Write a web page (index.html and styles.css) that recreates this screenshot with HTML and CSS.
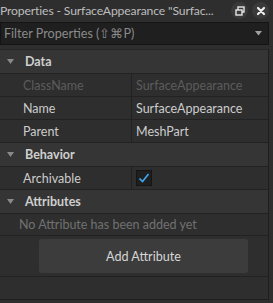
FILE: index.html
```html
<!DOCTYPE html>
<html lang="en">
<head>
    <meta charset="UTF-8">
    <meta name="viewport" content="width=device-width, initial-scale=1.0">
    <title>Properties</title>
    <link rel="stylesheet" href="styles.css">
</head>
<body>

    <div class="window">
        <div class="titlebar">
            <span class="title">Properties - SurfaceAppearance "Surfac...</span>
            <span class="title-btn">
                <svg width="10" height="10" viewBox="0 0 10 10"><rect x="3" y="1" width="6" height="5" fill="none" stroke="#e6e6e6" stroke-width="1.4"/><rect x="1" y="4" width="6" height="5" fill="#3a3a3a" stroke="#e6e6e6" stroke-width="1.4"/></svg>
            </span>
            <span class="title-btn">
                <svg width="10" height="10" viewBox="0 0 10 10"><path d="M2 2 L8 8 M8 2 L2 8" stroke="#eeeeee" stroke-width="2.2" stroke-linecap="round"/></svg>
            </span>
        </div>

        <div class="filter">
            <span class="filter-text">Filter Properties (⇧⌘P)</span>
            <svg class="caret" width="7" height="5" viewBox="0 0 7 5"><path d="M0 0 H7 L3.5 4.5 Z" fill="#a0a0a0"/></svg>
        </div>

        <div class="panel">
            <div class="group">
                <svg class="arrow" width="7" height="5" viewBox="0 0 7 5"><path d="M0 0 H7 L3.5 5 Z" fill="#8a8a8a"/></svg>
                Data
            </div>
            <div class="row disabled">
                <div class="key">ClassName</div>
                <div class="val">SurfaceAppearance</div>
            </div>
            <div class="row">
                <div class="key">Name</div>
                <div class="val">SurfaceAppearance</div>
            </div>
            <div class="row">
                <div class="key">Parent</div>
                <div class="val">MeshPart</div>
            </div>

            <div class="group">
                <svg class="arrow" width="7" height="5" viewBox="0 0 7 5"><path d="M0 0 H7 L3.5 5 Z" fill="#8a8a8a"/></svg>
                Behavior
            </div>
            <div class="row">
                <div class="key">Archivable</div>
                <div class="val">
                    <span class="check">
                        <svg width="12" height="12" viewBox="0 0 12 12"><path d="M1.5 6.5 L4.5 9.5 L10.5 2" fill="none" stroke="#3fa9f5" stroke-width="1.6"/></svg>
                    </span>
                </div>
            </div>

            <div class="group">
                <svg class="arrow" width="7" height="5" viewBox="0 0 7 5"><path d="M0 0 H7 L3.5 5 Z" fill="#8a8a8a"/></svg>
                Attributes
            </div>
            <div class="empty">No Attribute has been added yet</div>
            <div class="add-row">
                <button class="add-btn">Add Attribute</button>
            </div>
            <div class="bottom"></div>
        </div>
    </div>

</body>
</html>
```

FILE: styles.css
```css
body {
    margin: 0;
    background-color: #2e2e2e;
    font-family: Lato, "Open Sans", sans-serif;
    font-size: 12.5px;
    color: #cccccc;
    overflow: hidden;
}
.window {
    width: 273px;
    height: 303px;
}
.titlebar {
    height: 21px;
    display: flex;
    align-items: center;
    background-color: #2e2e2e;
}
.title {
    flex: 1;
    white-space: nowrap;
    overflow: hidden;
    color: #bdbdbd;
    font-size: 12.2px;
    letter-spacing: -0.15px;
}
.title-btn {
    width: 17px;
    height: 17px;
    border-radius: 50%;
    background-color: #3a3a3a;
    display: flex;
    align-items: center;
    justify-content: center;
    margin-right: 4px;
}
.filter {
    height: 21px;
    margin: 1px 4px 0 0;
    background-color: #1f1f1f;
    border: 1px solid #141414;
    display: flex;
    align-items: center;
    padding-left: 3px;
}
.filter-text {
    flex: 1;
    color: #8a8a8a;
    font-size: 12.6px;
}
.caret {
    margin-right: 6px;
}
.panel {
    margin-top: 4px;
    width: 268px;
    border-right: 1px solid #1e1e1e;
    border-top: 1px solid #262626;
}
.group {
    height: 23px;
    display: flex;
    align-items: center;
    background-color: #353535;
    border-bottom: 1px solid #222222;
    font-weight: bold;
    color: #cfcfcf;
}
.arrow {
    margin-left: 7px;
    margin-right: 11px;
}
.row {
    height: 22px;
    display: flex;
    border-bottom: 1px solid #222222;
    background-color: #2e2e2e;
}
.key {
    width: 132px;
    padding-left: 23px;
    box-sizing: border-box;
    border-right: 1px solid #222222;
    display: flex;
    align-items: center;
}
.val {
    flex: 1;
    padding-left: 4px;
    display: flex;
    align-items: center;
}
.row.disabled {
    color: #5c5c5c;
}
.check {
    width: 14px;
    height: 14px;
    background-color: #1f1f1f;
    border: 1px solid #151515;
    display: flex;
    align-items: center;
    justify-content: center;
}
.empty {
    height: 21px;
    display: flex;
    align-items: center;
    padding-left: 19px;
    color: #717171;
    border-bottom: 1px solid #222222;
}
.add-row {
    height: 40px;
    display: flex;
    align-items: center;
    border-bottom: 1px solid #222222;
}
.add-btn {
    margin-left: 39px;
    width: 209px;
    height: 34px;
    border: none;
    border-radius: 3px;
    background-color: #3c3c3c;
    color: #d6d6d6;
    font-family: Lato, "Open Sans", sans-serif;
    font-size: 12.6px;
}
.bottom {
    height: 22px;
    border-bottom: 1px solid #1e1e1e;
}
```
